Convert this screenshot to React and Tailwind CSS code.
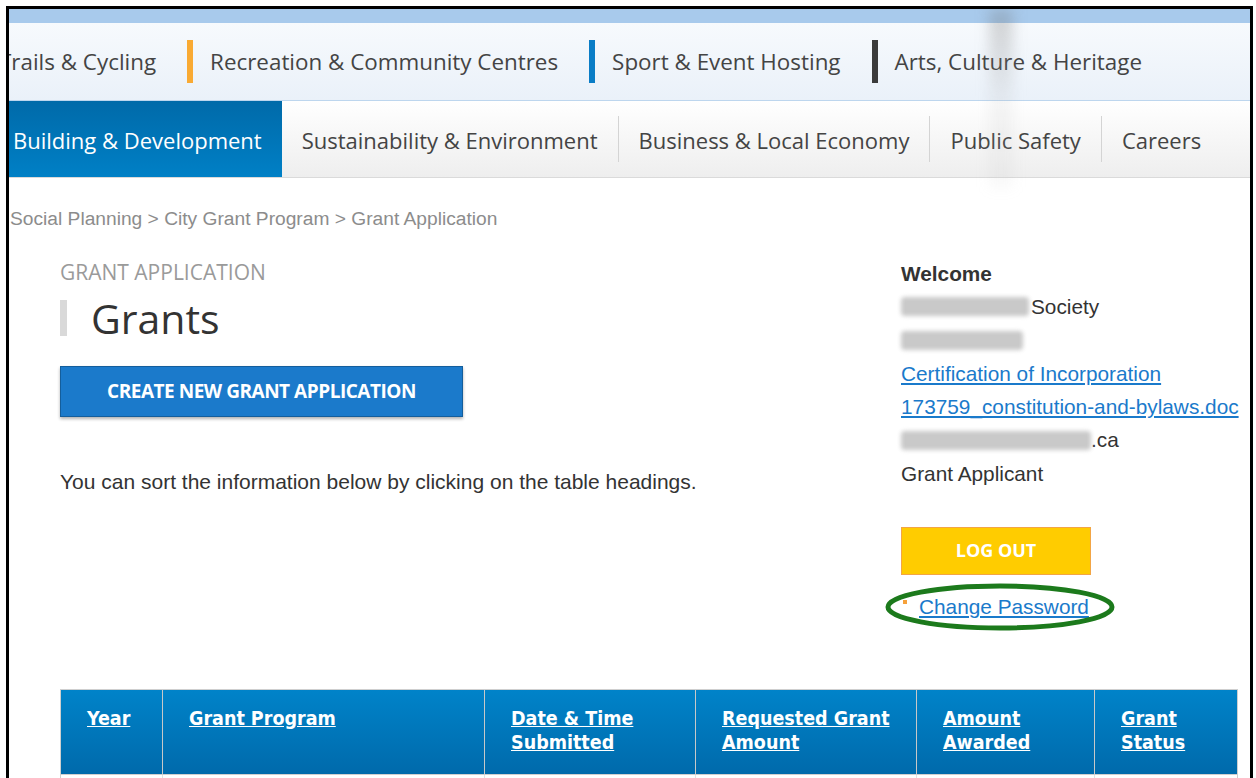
import React from 'react';

const segoe = { fontFamily: '"Open Sans", "Noto Sans", sans-serif' };
const arial = { fontFamily: '"Liberation Sans", Arial, sans-serif' };

const sections = [
  { label: 'Recreation & Community Centres', bar: 'bg-[#f9aa33]' },
  { label: 'Sport & Event Hosting', bar: 'bg-[#0a7dc6]' },
  { label: 'Arts, Culture & Heritage', bar: 'bg-[#3b3b3b]' },
];

const topics = ['Sustainability & Environment', 'Business & Local Economy', 'Public Safety', 'Careers'];

const columns = [
  { w: 'w-[101px]', lines: ['Year'] },
  { w: 'w-[322px]', lines: ['Grant Program'] },
  { w: 'w-[211px]', lines: ['Date & Time', 'Submitted'] },
  { w: 'w-[221px]', lines: ['Requested Grant', 'Amount'] },
  { w: 'w-[178px]', lines: ['Amount', 'Awarded'] },
  { w: 'flex-1', lines: ['Grant', 'Status'] },
];

// grey smudge standing in for redacted account details
const Redacted = ({ w }) => (
  <span className={`inline-block h-[19px] ${w} rounded-sm bg-[#c9c9c9] blur-[2px] align-middle`} />
);

export default function App() {
  return (
    <div className="w-[1256px] h-[778px] bg-white pl-[6px] pr-[3px] pt-[6px] overflow-hidden">
      <div className="relative h-full border-l-[3px] border-r-[3px] border-t-[3px] border-black overflow-hidden">
        {/* sky strip from the banner photo */}
        <div className="h-[14px] bg-[#a8caec]" />

        {/* section nav */}
        <div
          className="h-[78px] flex items-center border-b border-[#bdd6ee] bg-gradient-to-b from-[#f7fafd] to-[#eaf1f9] text-[#444] text-[22.4px]"
          style={segoe}
        >
          <span className="ml-[-10px] whitespace-nowrap">Trails &amp; Cycling</span>
          {sections.map((s) => (
            <div key={s.label} className="flex items-center">
              <span className={`ml-[31px] mr-[17px] w-[6px] h-[43px] ${s.bar}`} />
              <span className="whitespace-nowrap">{s.label}</span>
            </div>
          ))}
        </div>

        {/* topic nav */}
        <div
          className="h-[77px] flex items-stretch border-b border-[#dadada] bg-gradient-to-b from-white to-[#eeeeee] text-[#444] text-[22px]"
          style={segoe}
        >
          <div className="flex items-center pt-[3px] pl-[4px] pr-[20px] bg-gradient-to-b from-[#006aa9] to-[#0080c6] text-white whitespace-nowrap">
            Building &amp; Development
          </div>
          {topics.map((t, i) => (
            <div key={t} className="flex items-center">
              {i > 0 && <span className="w-px h-[46px] bg-[#d4d4d4]" />}
              <span className="px-[20px] pt-[3px] whitespace-nowrap">{t}</span>
            </div>
          ))}
        </div>

        {/* blurred tower from the banner photo */}
        <div className="absolute left-[980px] top-0 w-[24px] h-[178px] bg-gradient-to-b from-[#6a6a6a]/30 via-[#aaa]/12 to-[#bbb]/10 blur-[7px]" />

        <div className="pt-[30px] pl-[1px] text-[19.2px] leading-[22px] text-[#8c8c8c]" style={arial}>
          Social Planning &gt; City Grant Program &gt; Grant Application
        </div>

        <div className="flex pl-[51px] pt-[30px]">
          {/* left column */}
          <div className="w-[841px]">
            <div className="text-[21px] leading-[24px] text-[#9a9a9a] uppercase" style={segoe}>
              Grant Application
            </div>
            <div className="flex items-center mt-[11px]">
              <span className="w-[7px] h-[36px] bg-[#d9d9d9]" />
              <h1 className="ml-[24px] text-[41px] leading-[46px] text-[#333]" style={segoe}>
                Grants
              </h1>
            </div>
            <button
              className="mt-[25px] w-[403px] h-[51px] bg-[#1b7acb] border border-[#145e9c] shadow-[0_2px_3px_rgba(0,0,0,0.3)] text-white font-bold text-[19px] tracking-tight"
              style={segoe}
            >
              CREATE NEW GRANT APPLICATION
            </button>
            <p className="mt-[53px] text-[21px] leading-[24px] text-[#333]" style={arial}>
              You can sort the information below by clicking on the table headings.
            </p>
          </div>

          {/* account panel */}
          <div className="relative mt-[-3px] text-[20.8px] leading-[33.3px] text-[#333]" style={arial}>
            <div className="font-bold">Welcome</div>
            <div className="flex items-center">
              <Redacted w="w-[128px]" />
              <span className="ml-[2px]">Society</span>
            </div>
            <div className="flex items-center h-[33.3px]">
              <Redacted w="w-[122px]" />
            </div>
            <a href="#" className="block text-[#1a7acb] underline">Certification of Incorporation</a>
            <a href="#" className="block text-[#1a7acb] underline">173759_constitution-and-bylaws.doc</a>
            <div className="flex items-center">
              <Redacted w="w-[190px]" />
              <span>.ca</span>
            </div>
            <div>Grant Applicant</div>
            <button
              className="mt-[37px] w-[190px] h-[48px] bg-[#ffcc00] border border-[#f2a545] text-white font-bold text-[18px]"
              style={segoe}
            >
              LOG OUT
            </button>
            <div className="relative mt-[17px] flex items-center h-[30px]">
              <span className="ml-[2px] w-[4px] h-[4px] bg-[#f6a13a] self-start mt-[8px]" />
              <a href="#" className="ml-[12px] text-[#1a7acb] underline text-[20.8px]">Change Password</a>
              <svg className="absolute left-[-16px] top-[-10px]" width="232" height="50" viewBox="0 0 232 50">
                <ellipse cx="115" cy="25" rx="112" ry="21" fill="none" stroke="#1c7a1c" strokeWidth="5" />
              </svg>
            </div>
          </div>
        </div>

        {/* grants table */}
        <div className="ml-[51px] mr-[12px] mt-[67px] border border-[#cfcfcf]">
          <div className="flex h-[84px] bg-gradient-to-b from-[#0083c9] to-[#006aab]">
            {columns.map((c, i) => (
              <div
                key={i}
                className={`${c.w} ${i > 0 ? 'border-l border-[#c8c8c8]' : ''} pl-[26px] pt-[17px] text-white font-bold text-[19.5px] leading-[24px]`}
                style={{ fontFamily: '"Liberation Sans Narrow", "DejaVu Sans Condensed", "Liberation Sans", sans-serif' }}
              >
                {c.lines.map((l) => (
                  <div key={l}>
                    <a href="#" className="underline">{l}</a>
                  </div>
                ))}
              </div>
            ))}
          </div>
          <div className="flex h-[30px] border-t border-[#cfcfcf]">
            {columns.map((c, i) => (
              <div key={i} className={`${c.w} ${i > 0 ? 'border-l border-[#e2e2e2]' : ''}`} />
            ))}
          </div>
        </div>
      </div>
    </div>
  );
}
